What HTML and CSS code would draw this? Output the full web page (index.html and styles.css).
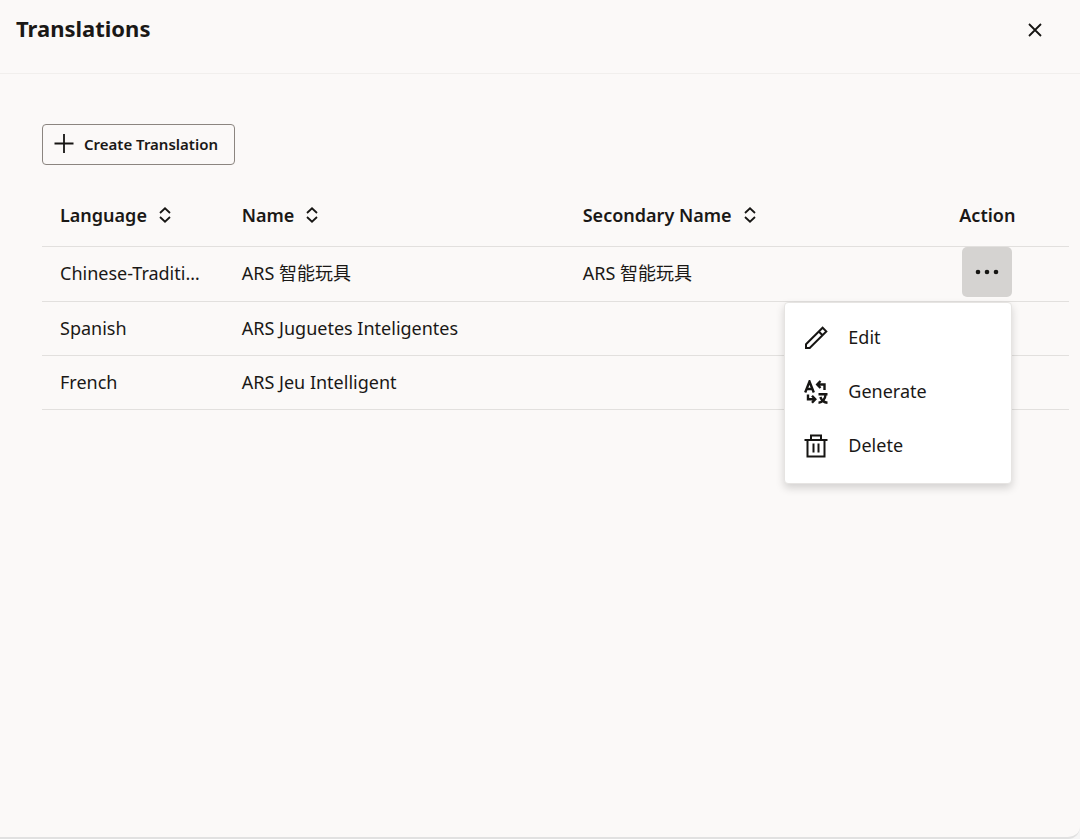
FILE: index.html
```html
<!DOCTYPE html>
<html lang="en">
<head>
<meta charset="utf-8">
<title>Translations</title>
<link rel="stylesheet" href="styles.css">
</head>
<body>
<section class="panel">
  <header class="panel-header">
    <h1 class="panel-title">Translations</h1>
    <button class="close" type="button" aria-label="Close">
      <svg width="14" height="14" viewBox="0 0 14 14"><path d="M1 1L13 13M13 1L1 13"/></svg>
    </button>
  </header>
  <main class="content">
    <button class="create" type="button">
      <svg width="20" height="20" viewBox="0 0 20 20"><path d="M10 0V19M0.5 9.5H19.5"/></svg>
      <span>Create Translation</span>
    </button>
    <table class="grid">
      <colgroup><col class="col-language"><col class="col-name"><col class="col-name"><col class="col-action"></colgroup>
      <thead>
        <tr>
          <th scope="col"><button class="sort" type="button">Language <svg width="12" height="16" viewBox="0 0 12 16"><path d="M1 6L6 1.3L11 6M1 10L6 14.7L11 10"/></svg></button></th>
          <th scope="col"><button class="sort" type="button">Name <svg width="12" height="16" viewBox="0 0 12 16"><path d="M1 6L6 1.3L11 6M1 10L6 14.7L11 10"/></svg></button></th>
          <th scope="col"><button class="sort" type="button">Secondary Name <svg width="12" height="16" viewBox="0 0 12 16"><path d="M1 6L6 1.3L11 6M1 10L6 14.7L11 10"/></svg></button></th>
          <th scope="col" class="action">Action</th>
        </tr>
      </thead>
      <tbody>
        <tr>
          <td class="clip">Chinese-Traditional</td>
          <td>ARS <span lang="zh">智能玩具</span></td>
          <td>ARS <span lang="zh">智能玩具</span></td>
          <td class="action">
            <div class="menu-anchor">
              <button class="more" type="button" aria-label="More actions" aria-expanded="true">
                <svg width="24" height="6" viewBox="0 0 24 6"><circle cx="3" cy="3" r="2.3"/><circle cx="12" cy="3" r="2.3"/><circle cx="21" cy="3" r="2.3"/></svg>
              </button>
              <div class="menu" role="menu">
                <button class="menu-item" type="button" role="menuitem">
                  <svg width="24" height="24" viewBox="0 0 24 24"><path d="M2 18.3L18.6 1.7L22.3 5.4L5.7 22H2ZM14.8 5.5L18.5 9.2"/></svg>
                  <span>Edit</span>
                </button>
                <button class="menu-item" type="button" role="menuitem">
                  <svg class="bold" width="24" height="24" viewBox="0 0 24 24"><path d="M1.2 12.5L5.5 1.5L9.8 12.5M2.8 9H8.2M16.5 1L13.2 4.5L16.5 8M13.2 4.5H20.5V10M4 14.5V19.3H11M8 15.8L11.3 19.3L8 22.8M14.5 14.2H23.5M21.5 14.5C21.5 18.5 18.5 22.5 14.5 22.8M16.3 17C17.5 20 20 22.5 23.5 22.8"/></svg>
                  <span>Generate</span>
                </button>
                <button class="menu-item" type="button" role="menuitem">
                  <svg width="24" height="24" viewBox="0 0 24 24"><path d="M0.5 6H23.5M7 6V1.5H17V6M3.5 6V22.5H20.5V6M9.5 9.5V18.5M14.5 9.5V18.5"/></svg>
                  <span>Delete</span>
                </button>
              </div>
            </div>
          </td>
        </tr>
        <tr><td>Spanish</td><td>ARS Juguetes Inteligentes</td><td></td><td></td></tr>
        <tr><td>French</td><td>ARS Jeu Intelligent</td><td></td><td></td></tr>
      </tbody>
    </table>
  </main>
</section>
</body>
</html>
```
FILE: styles.css
```css
* { box-sizing: border-box; }

body {
  margin: 0;
  background: #f5f5f5;
  color: #1a1816;
  font: 18px/24px "Noto Sans", "Noto Sans CJK TC", sans-serif;
}

button {
  margin: 0;
  padding: 0;
  border: 0;
  background: none;
  color: inherit;
  font: inherit;
  cursor: pointer;
}

svg {
  display: block;
  flex: none;
  fill: none;
  stroke: #161513;
  stroke-width: 2;
}

.panel {
  min-height: 100vh;
  background: #fbf9f8;
  border-bottom: 2px solid #e1e1e1;
  border-bottom-right-radius: 12px;
}

.panel-header {
  display: flex;
  align-items: flex-start;
  justify-content: space-between;
  height: 74px;
  padding: 16px 34px 0 16px;
  border-bottom: 1px solid #f1efed;
}

.panel-title {
  margin: 0;
  font-size: 22px;
  line-height: 24px;
  font-weight: 700;
}

.close { padding: 7px 4px; }

.close svg,
.sort svg { stroke-width: 1.8; }

.content { padding: 50px 11px 0 42px; }

.create {
  display: flex;
  align-items: center;
  gap: 10px;
  height: 41px;
  padding: 0 16px 2px 11px;
  border: 1px solid #8b8580;
  border-radius: 4px;
  font-size: 15px;
  font-weight: 600;
}

.create svg { stroke-width: 1.8; }

.grid {
  width: 100%;
  margin-top: 20px;
  table-layout: fixed;
  border-collapse: separate;
  border-spacing: 0;
}

.col-language { width: 17.7%; }
.col-name { width: 33.2%; }
.col-action { width: 15.9%; }

.grid th,
.grid td {
  height: 54px;
  padding: 0 18px 2px;
  border-bottom: 1px solid #e2e0de;
  text-align: left;
  white-space: nowrap;
}

.grid th {
  height: 62px;
  font-weight: 600;
}

.grid .action {
  padding: 0;
  text-align: center;
}

.grid th.action { padding-bottom: 2px; }

.clip {
  overflow: hidden;
  text-overflow: ellipsis;
}

.sort {
  display: flex;
  align-items: center;
  gap: 12px;
}

.menu-anchor {
  position: relative;
  width: 50px;
  height: 54px;
  margin: 0 auto;
}

.more {
  display: grid;
  place-items: center;
  width: 50px;
  height: 50px;
  border-radius: 5px;
  background: #d5d3d1;
}

.more svg {
  fill: #161513;
  stroke: none;
}

.menu {
  position: absolute;
  z-index: 1;
  top: 55px;
  right: 0;
  width: 228px;
  padding: 7px 0 11px;
  border: 1px solid #e6e4e2;
  border-radius: 4px;
  background: #fff;
  box-shadow: 0 4px 8px rgba(0, 0, 0, 0.16);
}

.menu-item {
  display: flex;
  align-items: center;
  gap: 20px;
  width: 100%;
  height: 54px;
  padding: 0 19px;
}

.menu-item svg { margin-top: 2px; }

.menu-item .bold { stroke-width: 2.4; }
```
